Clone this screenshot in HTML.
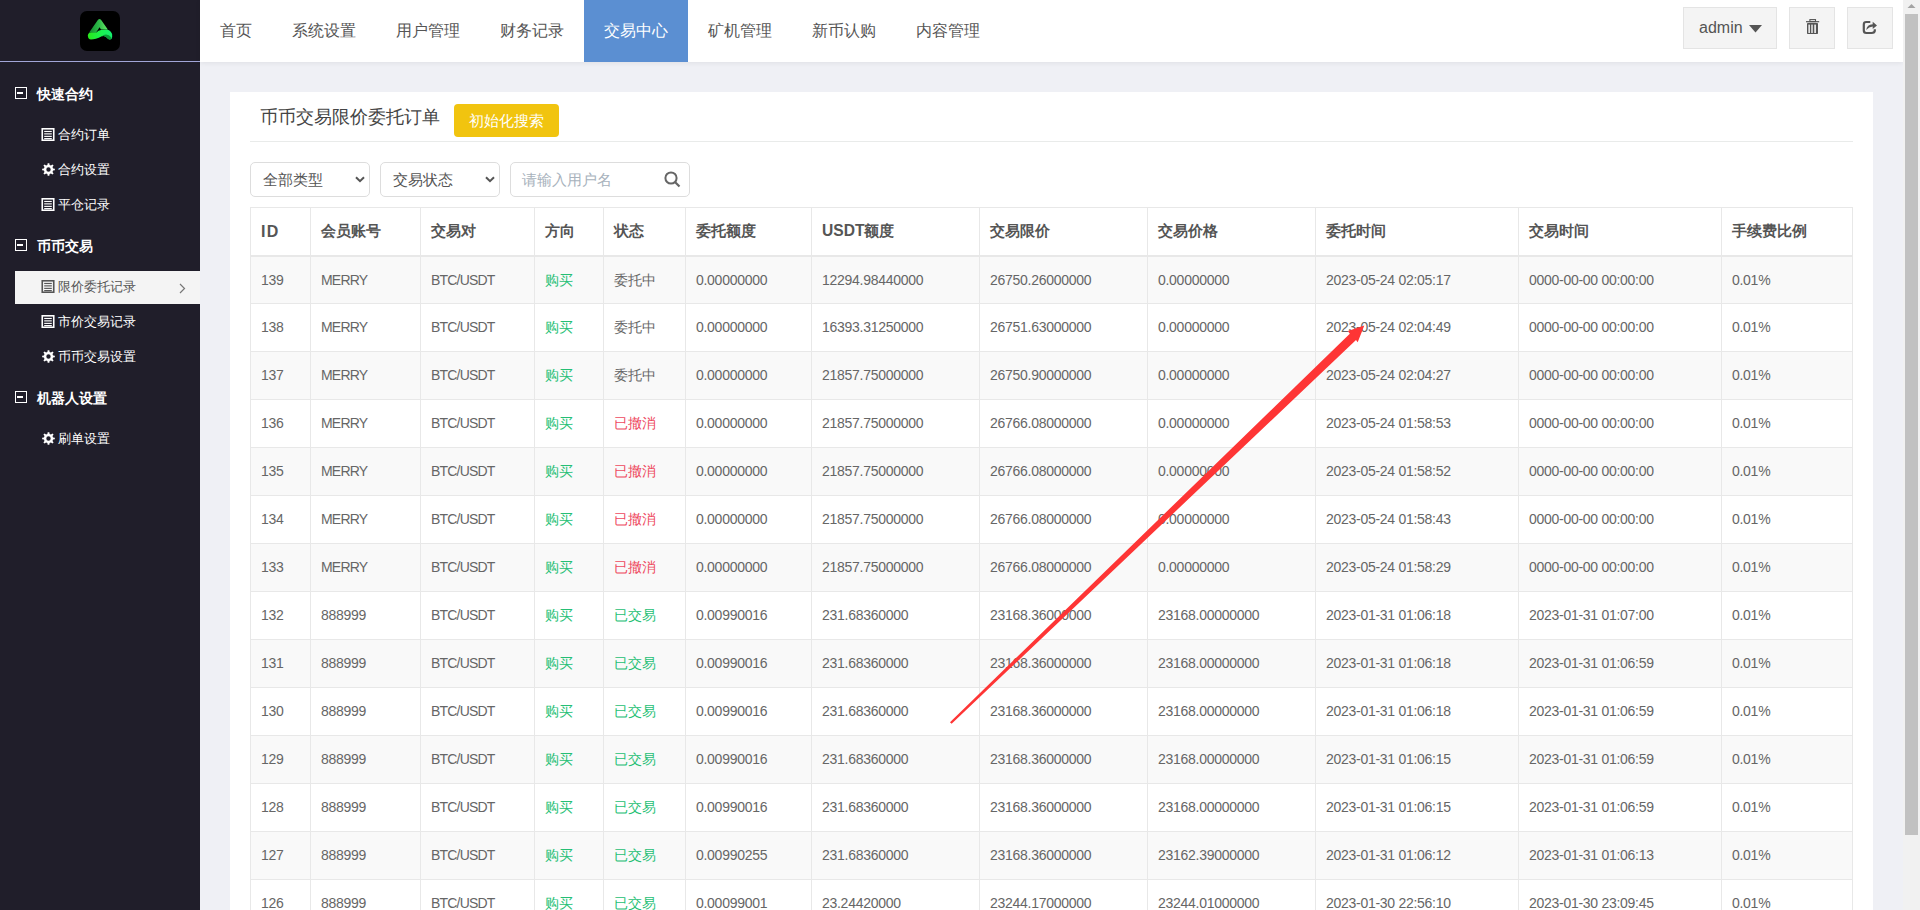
<!DOCTYPE html>
<html>
<head>
<meta charset="utf-8">
<style>
*{box-sizing:border-box;margin:0;padding:0}
html,body{width:1920px;height:910px;overflow:hidden}
body{position:relative;background:#eff0f5;font-family:"Liberation Sans",sans-serif;color:#666}
.abs{position:absolute}
#side{position:absolute;left:0;top:0;width:200px;height:910px;background:#201e2a}
#logoline{position:absolute;left:0;top:61px;width:200px;height:1px;background:#a2a6d8}
#logo{position:absolute;left:80px;top:11px;width:40px;height:40px;background:#000;border-radius:7px;overflow:hidden}
.grp{position:absolute;left:37px;font-size:14px;font-weight:bold;color:#fff;line-height:16px;height:16px;white-space:nowrap}
.gico{position:absolute;left:15px;width:12px;height:12px;border:1.6px solid #fff}
.gico:after{content:"";position:absolute;left:1.4px;top:3.6px;width:6px;height:2px;background:#fff}
.sub{position:absolute;left:58px;font-size:13px;color:#fff;line-height:16px;height:16px;white-space:nowrap}
.sico{position:absolute;left:42px;width:13px;height:13px}
#active{position:absolute;left:15px;top:271px;width:185px;height:33px;background:#f4f4f4}
#hdr{position:absolute;left:200px;top:0;width:1703px;height:62px;background:#fff;box-shadow:0 1px 5px rgba(0,0,0,.07)}
.nav{position:absolute;top:0;height:62px;line-height:62px;font-size:16px;color:#555;padding:0 20px;white-space:nowrap}
.nav.on{background:#5b8fd2;color:#fff}
.hbtn{position:absolute;top:7px;height:42px;background:#f4f4f4;border:1px solid #e4e4e4}
#sb{position:absolute;left:1903px;top:0;width:17px;height:910px;background:#f1f1f1}
#thumb{position:absolute;left:2px;top:14px;width:13px;height:821px;background:#c1c1c1}
#card{position:absolute;left:230px;top:92px;width:1643px;height:830px;background:#fff}
.title{position:absolute;left:260px;top:105px;font-size:18px;color:#444;line-height:24px;white-space:nowrap}
#btn{position:absolute;left:454px;top:104px;width:105px;height:33px;background:#f1c40f;border-radius:4px;color:#fff;font-size:15px;line-height:33px;text-align:center}
#hr{position:absolute;left:250px;top:141px;width:1603px;height:1px;background:#e9ebea}
.sel{position:absolute;top:162px;height:35px;border:1px solid #ddd;border-radius:5px;background:#fff}
.seltxt{position:absolute;left:12px;top:8px;font-size:15px;color:#555;line-height:18px;white-space:nowrap}
.th{position:absolute;top:221px;font-size:14.5px;font-weight:bold;color:#555;line-height:20px;white-space:nowrap}
.td{position:absolute;font-size:14px;letter-spacing:-0.28px;color:#666;line-height:20px;white-space:nowrap}
.td.cn{font-size:13.5px;letter-spacing:0;margin-top:0.5px}
.lt{letter-spacing:-0.8px}
.g{color:#26bf75}
.r{color:#ee4a5f}
.stripe{position:absolute;left:251px;width:1601px;background:#f9f9f9}
.hl{position:absolute;left:250px;width:1603px;background:#e8e8e8}
.vl{position:absolute;top:207px;width:1px;height:703px;background:#e8e8e8}
</style>
</head>
<body>
<div id="side">
  <div id="logo">
    <svg width="40" height="40" viewBox="0 0 40 40">
      <defs>
        <linearGradient id="lg1" x1="0" y1="0" x2="1" y2="0"><stop offset="0" stop-color="#138a2e"/><stop offset=".5" stop-color="#2cb848"/><stop offset="1" stop-color="#66e866"/></linearGradient>
        <linearGradient id="lg2" x1="0" y1="0" x2="1" y2="0"><stop offset="0" stop-color="#2ae61a"/><stop offset=".55" stop-color="#1af550"/><stop offset="1" stop-color="#14f070"/></linearGradient>
      </defs>
      <path d="M9 21.8 L18 8.8 Q19.5 7 21 8.8 L27.8 18.4 L21 18.4 L19.5 16.2 L16 21.8 Z" fill="url(#lg1)"/>
      <path d="M7.8 24.5 Q8 21.6 11.5 21.5 L16.3 21.5 Q18.5 19.6 21 19.1 L26.5 18.4 Q29.5 18.6 30.8 20.8 Q32.6 22.5 32.2 26 Q31.8 28.8 29.8 28.6 Q28 28.2 26.6 26.4 Q24.5 24.2 21.8 25.2 Q15.5 28.4 11 28.6 Q8 28.6 7.8 24.5 Z" fill="url(#lg2)"/>
      <path d="M21.8 25.2 Q24.5 24.2 26.6 26.4 Q28 28.2 29.8 28.6 Q31.5 28.6 31.4 26.5 Q29 23.6 26 23.6 Q23.5 23.8 21.8 25.2Z" fill="#0a9e38"/>
    </svg>
  </div>
  <div id="logoline"></div>

  <div class="gico" style="top:87px"></div><div class="grp" style="top:86px">快速合约</div>
  <svg class="abs" style="left:41px;top:128px" width="14" height="13" viewBox="0 0 14 13"><rect x="1.25" y=".8" width="11.5" height="11.45" fill="none" stroke="#fff" stroke-width="1.6"/><rect x="3.2" y="2.9" width="7.6" height="1.15" fill="#fff"/><rect x="3.2" y="5.3" width="7.6" height="1.15" fill="#fff"/><rect x="3.2" y="7.8" width="7.6" height="1.15" fill="#fff"/><rect x="3.2" y="10.0" width="7.6" height="1.15" fill="#fff"/></svg>
  <div class="sub" style="top:127px">合约订单</div>
  <svg class="sico" style="top:163px" viewBox="0 0 13 13"><path d="M5.65 0.16 L7.35 0.16 L7.60 1.93 L8.96 2.49 L10.38 1.41 L11.59 2.62 L10.51 4.04 L11.07 5.40 L12.84 5.65 L12.84 7.35 L11.07 7.60 L10.51 8.96 L11.59 10.38 L10.38 11.59 L8.96 10.51 L7.60 11.07 L7.35 12.84 L5.65 12.84 L5.40 11.07 L4.04 10.51 L2.62 11.59 L1.41 10.38 L2.49 8.96 L1.93 7.60 L0.16 7.35 L0.16 5.65 L1.93 5.40 L2.49 4.04 L1.41 2.62 L2.62 1.41 L4.04 2.49 L5.40 1.93Z M6.5 4.3 A2.2 2.2 0 1 0 6.5 8.7 A2.2 2.2 0 1 0 6.5 4.3Z" fill="#fff" fill-rule="evenodd"/></svg>
  <div class="sub" style="top:162px">合约设置</div>
  <svg class="abs" style="left:41px;top:198px" width="14" height="13" viewBox="0 0 14 13"><rect x="1.25" y=".8" width="11.5" height="11.45" fill="none" stroke="#fff" stroke-width="1.6"/><rect x="3.2" y="2.9" width="7.6" height="1.15" fill="#fff"/><rect x="3.2" y="5.3" width="7.6" height="1.15" fill="#fff"/><rect x="3.2" y="7.8" width="7.6" height="1.15" fill="#fff"/><rect x="3.2" y="10.0" width="7.6" height="1.15" fill="#fff"/></svg>
  <div class="sub" style="top:197px">平仓记录</div>

  <div class="gico" style="top:239px"></div><div class="grp" style="top:238px">币币交易</div>
  <div id="active"></div>
  <svg class="abs" style="left:41px;top:280px" width="14" height="13" viewBox="0 0 14 13"><rect x="1.25" y=".8" width="11.5" height="11.45" fill="none" stroke="#555" stroke-width="1.6"/><rect x="3.2" y="2.9" width="7.6" height="1.15" fill="#555"/><rect x="3.2" y="5.3" width="7.6" height="1.15" fill="#555"/><rect x="3.2" y="7.8" width="7.6" height="1.15" fill="#555"/><rect x="3.2" y="10.0" width="7.6" height="1.15" fill="#555"/></svg>
  <div class="sub" style="top:279px;color:#555">限价委托记录</div>
  <svg class="abs" style="left:179px;top:283px" width="7" height="11" viewBox="0 0 7 11"><path d="M1 1 L5.5 5.5 L1 10" fill="none" stroke="#777" stroke-width="1.2"/></svg>
  <svg class="abs" style="left:41px;top:315px" width="14" height="13" viewBox="0 0 14 13"><rect x="1.25" y=".8" width="11.5" height="11.45" fill="none" stroke="#fff" stroke-width="1.6"/><rect x="3.2" y="2.9" width="7.6" height="1.15" fill="#fff"/><rect x="3.2" y="5.3" width="7.6" height="1.15" fill="#fff"/><rect x="3.2" y="7.8" width="7.6" height="1.15" fill="#fff"/><rect x="3.2" y="10.0" width="7.6" height="1.15" fill="#fff"/></svg>
  <div class="sub" style="top:314px">市价交易记录</div>
  <svg class="sico" style="top:350px" viewBox="0 0 13 13"><path d="M5.65 0.16 L7.35 0.16 L7.60 1.93 L8.96 2.49 L10.38 1.41 L11.59 2.62 L10.51 4.04 L11.07 5.40 L12.84 5.65 L12.84 7.35 L11.07 7.60 L10.51 8.96 L11.59 10.38 L10.38 11.59 L8.96 10.51 L7.60 11.07 L7.35 12.84 L5.65 12.84 L5.40 11.07 L4.04 10.51 L2.62 11.59 L1.41 10.38 L2.49 8.96 L1.93 7.60 L0.16 7.35 L0.16 5.65 L1.93 5.40 L2.49 4.04 L1.41 2.62 L2.62 1.41 L4.04 2.49 L5.40 1.93Z M6.5 4.3 A2.2 2.2 0 1 0 6.5 8.7 A2.2 2.2 0 1 0 6.5 4.3Z" fill="#fff" fill-rule="evenodd"/></svg>
  <div class="sub" style="top:349px">币币交易设置</div>

  <div class="gico" style="top:391px"></div><div class="grp" style="top:390px">机器人设置</div>
  <svg class="sico" style="top:432px" viewBox="0 0 13 13"><path d="M5.65 0.16 L7.35 0.16 L7.60 1.93 L8.96 2.49 L10.38 1.41 L11.59 2.62 L10.51 4.04 L11.07 5.40 L12.84 5.65 L12.84 7.35 L11.07 7.60 L10.51 8.96 L11.59 10.38 L10.38 11.59 L8.96 10.51 L7.60 11.07 L7.35 12.84 L5.65 12.84 L5.40 11.07 L4.04 10.51 L2.62 11.59 L1.41 10.38 L2.49 8.96 L1.93 7.60 L0.16 7.35 L0.16 5.65 L1.93 5.40 L2.49 4.04 L1.41 2.62 L2.62 1.41 L4.04 2.49 L5.40 1.93Z M6.5 4.3 A2.2 2.2 0 1 0 6.5 8.7 A2.2 2.2 0 1 0 6.5 4.3Z" fill="#fff" fill-rule="evenodd"/></svg>
  <div class="sub" style="top:431px">刷单设置</div>
</div>

<div id="hdr">
  <div class="nav" style="left:0">首页</div>
  <div class="nav" style="left:72px">系统设置</div>
  <div class="nav" style="left:176px">用户管理</div>
  <div class="nav" style="left:280px">财务记录</div>
  <div class="nav on" style="left:384px;width:104px">交易中心</div>
  <div class="nav" style="left:488px">矿机管理</div>
  <div class="nav" style="left:592px">新币认购</div>
  <div class="nav" style="left:696px">内容管理</div>

  <div class="hbtn" style="left:1483px;width:94px">
    <div class="abs" style="left:15px;top:10px;font-size:16px;color:#555;line-height:20px">admin</div>
    <svg class="abs" style="left:65px;top:17px" width="13" height="8" viewBox="0 0 13 8"><path d="M0 0 L13 0 L6.5 7.5Z" fill="#555"/></svg>
  </div>
  <div class="hbtn" style="left:1589px;width:46px">
    <svg class="abs" style="left:16px;top:11px" width="14" height="16" viewBox="0 0 14 16"><rect x="3.9" y="0.6" width="5.6" height="2" fill="none" stroke="#555" stroke-width="1.1"/><rect x="0" y="2.1" width="13.2" height="1.2" fill="#555"/><rect x="1" y="4" width="11" height="11" rx="0.8" fill="#555"/><rect x="2.4" y="5.6" width="1.5" height="8.4" fill="#f4f4f4"/><rect x="5.3" y="5.6" width="1.4" height="8.4" fill="#f4f4f4"/><rect x="8.3" y="5.6" width="1.6" height="8.4" fill="#f4f4f4"/></svg>
  </div>
  <div class="hbtn" style="left:1647px;width:46px">
    <svg class="abs" style="left:14px;top:12px" width="16" height="15" viewBox="0 0 16 15"><path d="M8.3 2 H4.2 Q1.8 2 1.8 4.5 V10.5 Q1.8 13 4.3 13 H9.5 Q12.8 13 12.8 10.5 V9.2" fill="none" stroke="#555" stroke-width="2.2"/><path d="M4.2 10 Q5 4.3 10.7 4.2 V1.8 L15 5.4 L10.7 9 V6.6 Q7 6.8 4.2 10 Z" fill="#555"/></svg>
  </div>
</div>

<div id="sb">
  <svg class="abs" style="left:4px;top:3px" width="9" height="6" viewBox="0 0 9 6"><path d="M0.5 5 L4.5 1 L8.5 5Z" fill="#a3a3a3"/></svg>
  <div id="thumb"></div>
</div>

<div id="card"></div>
<div class="title">币币交易限价委托订单</div>
<div id="btn">初始化搜索</div>
<div id="hr"></div>

<div class="sel" style="left:250px;width:120px"><div class="seltxt">全部类型</div>
  <svg class="abs" style="left:104px;top:13px" width="10" height="7" viewBox="0 0 10 7"><path d="M1 1.2 L5 5.2 L9 1.2" fill="none" stroke="#555" stroke-width="2"/></svg></div>
<div class="sel" style="left:380px;width:120px"><div class="seltxt">交易状态</div>
  <svg class="abs" style="left:104px;top:13px" width="10" height="7" viewBox="0 0 10 7"><path d="M1 1.2 L5 5.2 L9 1.2" fill="none" stroke="#555" stroke-width="2"/></svg></div>
<div class="sel" style="left:510px;width:180px"><div class="seltxt" style="left:11px;color:#a8b2bc">请输入用户名</div>
  <svg class="abs" style="left:153px;top:8px" width="17" height="17" viewBox="0 0 17 17"><circle cx="7" cy="7" r="5.6" fill="none" stroke="#666" stroke-width="2"/><path d="M11 11 L15.5 15.5" stroke="#666" stroke-width="2.2"/></svg></div>

<div class="th" style="left:261px"><span style="font-size:16px;letter-spacing:1.4px;position:relative;top:0.5px">ID</span></div>
<div class="th" style="left:321px">会员账号</div>
<div class="th" style="left:431px">交易对</div>
<div class="th" style="left:545px">方向</div>
<div class="th" style="left:614px">状态</div>
<div class="th" style="left:696px">委托额度</div>
<div class="th" style="left:822px"><span style="font-size:15.6px;position:relative;top:0.3px">USDT</span>额度</div>
<div class="th" style="left:990px">交易限价</div>
<div class="th" style="left:1158px">交易价格</div>
<div class="th" style="left:1326px">委托时间</div>
<div class="th" style="left:1529px">交易时间</div>
<div class="th" style="left:1732px">手续费比例</div>
<div class="stripe" style="top:257px;height:46px"></div>
<div class="td" style="left:261px;top:270px">139</div>
<div class="td" style="left:321px;top:270px"><span class="lt">MERRY</span></div>
<div class="td" style="left:431px;top:270px"><span class="lt">BTC/USDT</span></div>
<div class="td cn" style="left:545px;top:270px"><span class="g">购买</span></div>
<div class="td cn" style="left:614px;top:270px">委托中</div>
<div class="td" style="left:696px;top:270px">0.00000000</div>
<div class="td" style="left:822px;top:270px">12294.98440000</div>
<div class="td" style="left:990px;top:270px">26750.26000000</div>
<div class="td" style="left:1158px;top:270px">0.00000000</div>
<div class="td" style="left:1326px;top:270px">2023-05-24 02:05:17</div>
<div class="td" style="left:1529px;top:270px">0000-00-00 00:00:00</div>
<div class="td" style="left:1732px;top:270px">0.01%</div>
<div class="td" style="left:261px;top:317px">138</div>
<div class="td" style="left:321px;top:317px"><span class="lt">MERRY</span></div>
<div class="td" style="left:431px;top:317px"><span class="lt">BTC/USDT</span></div>
<div class="td cn" style="left:545px;top:317px"><span class="g">购买</span></div>
<div class="td cn" style="left:614px;top:317px">委托中</div>
<div class="td" style="left:696px;top:317px">0.00000000</div>
<div class="td" style="left:822px;top:317px">16393.31250000</div>
<div class="td" style="left:990px;top:317px">26751.63000000</div>
<div class="td" style="left:1158px;top:317px">0.00000000</div>
<div class="td" style="left:1326px;top:317px">2023-05-24 02:04:49</div>
<div class="td" style="left:1529px;top:317px">0000-00-00 00:00:00</div>
<div class="td" style="left:1732px;top:317px">0.01%</div>
<div class="stripe" style="top:352px;height:47px"></div>
<div class="td" style="left:261px;top:365px">137</div>
<div class="td" style="left:321px;top:365px"><span class="lt">MERRY</span></div>
<div class="td" style="left:431px;top:365px"><span class="lt">BTC/USDT</span></div>
<div class="td cn" style="left:545px;top:365px"><span class="g">购买</span></div>
<div class="td cn" style="left:614px;top:365px">委托中</div>
<div class="td" style="left:696px;top:365px">0.00000000</div>
<div class="td" style="left:822px;top:365px">21857.75000000</div>
<div class="td" style="left:990px;top:365px">26750.90000000</div>
<div class="td" style="left:1158px;top:365px">0.00000000</div>
<div class="td" style="left:1326px;top:365px">2023-05-24 02:04:27</div>
<div class="td" style="left:1529px;top:365px">0000-00-00 00:00:00</div>
<div class="td" style="left:1732px;top:365px">0.01%</div>
<div class="td" style="left:261px;top:413px">136</div>
<div class="td" style="left:321px;top:413px"><span class="lt">MERRY</span></div>
<div class="td" style="left:431px;top:413px"><span class="lt">BTC/USDT</span></div>
<div class="td cn" style="left:545px;top:413px"><span class="g">购买</span></div>
<div class="td cn" style="left:614px;top:413px"><span class="r">已撤消</span></div>
<div class="td" style="left:696px;top:413px">0.00000000</div>
<div class="td" style="left:822px;top:413px">21857.75000000</div>
<div class="td" style="left:990px;top:413px">26766.08000000</div>
<div class="td" style="left:1158px;top:413px">0.00000000</div>
<div class="td" style="left:1326px;top:413px">2023-05-24 01:58:53</div>
<div class="td" style="left:1529px;top:413px">0000-00-00 00:00:00</div>
<div class="td" style="left:1732px;top:413px">0.01%</div>
<div class="stripe" style="top:448px;height:47px"></div>
<div class="td" style="left:261px;top:461px">135</div>
<div class="td" style="left:321px;top:461px"><span class="lt">MERRY</span></div>
<div class="td" style="left:431px;top:461px"><span class="lt">BTC/USDT</span></div>
<div class="td cn" style="left:545px;top:461px"><span class="g">购买</span></div>
<div class="td cn" style="left:614px;top:461px"><span class="r">已撤消</span></div>
<div class="td" style="left:696px;top:461px">0.00000000</div>
<div class="td" style="left:822px;top:461px">21857.75000000</div>
<div class="td" style="left:990px;top:461px">26766.08000000</div>
<div class="td" style="left:1158px;top:461px">0.00000000</div>
<div class="td" style="left:1326px;top:461px">2023-05-24 01:58:52</div>
<div class="td" style="left:1529px;top:461px">0000-00-00 00:00:00</div>
<div class="td" style="left:1732px;top:461px">0.01%</div>
<div class="td" style="left:261px;top:509px">134</div>
<div class="td" style="left:321px;top:509px"><span class="lt">MERRY</span></div>
<div class="td" style="left:431px;top:509px"><span class="lt">BTC/USDT</span></div>
<div class="td cn" style="left:545px;top:509px"><span class="g">购买</span></div>
<div class="td cn" style="left:614px;top:509px"><span class="r">已撤消</span></div>
<div class="td" style="left:696px;top:509px">0.00000000</div>
<div class="td" style="left:822px;top:509px">21857.75000000</div>
<div class="td" style="left:990px;top:509px">26766.08000000</div>
<div class="td" style="left:1158px;top:509px">0.00000000</div>
<div class="td" style="left:1326px;top:509px">2023-05-24 01:58:43</div>
<div class="td" style="left:1529px;top:509px">0000-00-00 00:00:00</div>
<div class="td" style="left:1732px;top:509px">0.01%</div>
<div class="stripe" style="top:544px;height:47px"></div>
<div class="td" style="left:261px;top:557px">133</div>
<div class="td" style="left:321px;top:557px"><span class="lt">MERRY</span></div>
<div class="td" style="left:431px;top:557px"><span class="lt">BTC/USDT</span></div>
<div class="td cn" style="left:545px;top:557px"><span class="g">购买</span></div>
<div class="td cn" style="left:614px;top:557px"><span class="r">已撤消</span></div>
<div class="td" style="left:696px;top:557px">0.00000000</div>
<div class="td" style="left:822px;top:557px">21857.75000000</div>
<div class="td" style="left:990px;top:557px">26766.08000000</div>
<div class="td" style="left:1158px;top:557px">0.00000000</div>
<div class="td" style="left:1326px;top:557px">2023-05-24 01:58:29</div>
<div class="td" style="left:1529px;top:557px">0000-00-00 00:00:00</div>
<div class="td" style="left:1732px;top:557px">0.01%</div>
<div class="td" style="left:261px;top:605px">132</div>
<div class="td" style="left:321px;top:605px">888999</div>
<div class="td" style="left:431px;top:605px"><span class="lt">BTC/USDT</span></div>
<div class="td cn" style="left:545px;top:605px"><span class="g">购买</span></div>
<div class="td cn" style="left:614px;top:605px"><span class="g">已交易</span></div>
<div class="td" style="left:696px;top:605px">0.00990016</div>
<div class="td" style="left:822px;top:605px">231.68360000</div>
<div class="td" style="left:990px;top:605px">23168.36000000</div>
<div class="td" style="left:1158px;top:605px">23168.00000000</div>
<div class="td" style="left:1326px;top:605px">2023-01-31 01:06:18</div>
<div class="td" style="left:1529px;top:605px">2023-01-31 01:07:00</div>
<div class="td" style="left:1732px;top:605px">0.01%</div>
<div class="stripe" style="top:640px;height:47px"></div>
<div class="td" style="left:261px;top:653px">131</div>
<div class="td" style="left:321px;top:653px">888999</div>
<div class="td" style="left:431px;top:653px"><span class="lt">BTC/USDT</span></div>
<div class="td cn" style="left:545px;top:653px"><span class="g">购买</span></div>
<div class="td cn" style="left:614px;top:653px"><span class="g">已交易</span></div>
<div class="td" style="left:696px;top:653px">0.00990016</div>
<div class="td" style="left:822px;top:653px">231.68360000</div>
<div class="td" style="left:990px;top:653px">23168.36000000</div>
<div class="td" style="left:1158px;top:653px">23168.00000000</div>
<div class="td" style="left:1326px;top:653px">2023-01-31 01:06:18</div>
<div class="td" style="left:1529px;top:653px">2023-01-31 01:06:59</div>
<div class="td" style="left:1732px;top:653px">0.01%</div>
<div class="td" style="left:261px;top:701px">130</div>
<div class="td" style="left:321px;top:701px">888999</div>
<div class="td" style="left:431px;top:701px"><span class="lt">BTC/USDT</span></div>
<div class="td cn" style="left:545px;top:701px"><span class="g">购买</span></div>
<div class="td cn" style="left:614px;top:701px"><span class="g">已交易</span></div>
<div class="td" style="left:696px;top:701px">0.00990016</div>
<div class="td" style="left:822px;top:701px">231.68360000</div>
<div class="td" style="left:990px;top:701px">23168.36000000</div>
<div class="td" style="left:1158px;top:701px">23168.00000000</div>
<div class="td" style="left:1326px;top:701px">2023-01-31 01:06:18</div>
<div class="td" style="left:1529px;top:701px">2023-01-31 01:06:59</div>
<div class="td" style="left:1732px;top:701px">0.01%</div>
<div class="stripe" style="top:736px;height:47px"></div>
<div class="td" style="left:261px;top:749px">129</div>
<div class="td" style="left:321px;top:749px">888999</div>
<div class="td" style="left:431px;top:749px"><span class="lt">BTC/USDT</span></div>
<div class="td cn" style="left:545px;top:749px"><span class="g">购买</span></div>
<div class="td cn" style="left:614px;top:749px"><span class="g">已交易</span></div>
<div class="td" style="left:696px;top:749px">0.00990016</div>
<div class="td" style="left:822px;top:749px">231.68360000</div>
<div class="td" style="left:990px;top:749px">23168.36000000</div>
<div class="td" style="left:1158px;top:749px">23168.00000000</div>
<div class="td" style="left:1326px;top:749px">2023-01-31 01:06:15</div>
<div class="td" style="left:1529px;top:749px">2023-01-31 01:06:59</div>
<div class="td" style="left:1732px;top:749px">0.01%</div>
<div class="td" style="left:261px;top:797px">128</div>
<div class="td" style="left:321px;top:797px">888999</div>
<div class="td" style="left:431px;top:797px"><span class="lt">BTC/USDT</span></div>
<div class="td cn" style="left:545px;top:797px"><span class="g">购买</span></div>
<div class="td cn" style="left:614px;top:797px"><span class="g">已交易</span></div>
<div class="td" style="left:696px;top:797px">0.00990016</div>
<div class="td" style="left:822px;top:797px">231.68360000</div>
<div class="td" style="left:990px;top:797px">23168.36000000</div>
<div class="td" style="left:1158px;top:797px">23168.00000000</div>
<div class="td" style="left:1326px;top:797px">2023-01-31 01:06:15</div>
<div class="td" style="left:1529px;top:797px">2023-01-31 01:06:59</div>
<div class="td" style="left:1732px;top:797px">0.01%</div>
<div class="stripe" style="top:832px;height:47px"></div>
<div class="td" style="left:261px;top:845px">127</div>
<div class="td" style="left:321px;top:845px">888999</div>
<div class="td" style="left:431px;top:845px"><span class="lt">BTC/USDT</span></div>
<div class="td cn" style="left:545px;top:845px"><span class="g">购买</span></div>
<div class="td cn" style="left:614px;top:845px"><span class="g">已交易</span></div>
<div class="td" style="left:696px;top:845px">0.00990255</div>
<div class="td" style="left:822px;top:845px">231.68360000</div>
<div class="td" style="left:990px;top:845px">23168.36000000</div>
<div class="td" style="left:1158px;top:845px">23162.39000000</div>
<div class="td" style="left:1326px;top:845px">2023-01-31 01:06:12</div>
<div class="td" style="left:1529px;top:845px">2023-01-31 01:06:13</div>
<div class="td" style="left:1732px;top:845px">0.01%</div>
<div class="td" style="left:261px;top:893px">126</div>
<div class="td" style="left:321px;top:893px">888999</div>
<div class="td" style="left:431px;top:893px"><span class="lt">BTC/USDT</span></div>
<div class="td cn" style="left:545px;top:893px"><span class="g">购买</span></div>
<div class="td cn" style="left:614px;top:893px"><span class="g">已交易</span></div>
<div class="td" style="left:696px;top:893px">0.00099001</div>
<div class="td" style="left:822px;top:893px">23.24420000</div>
<div class="td" style="left:990px;top:893px">23244.17000000</div>
<div class="td" style="left:1158px;top:893px">23244.01000000</div>
<div class="td" style="left:1326px;top:893px">2023-01-30 22:56:10</div>
<div class="td" style="left:1529px;top:893px">2023-01-30 23:09:45</div>
<div class="td" style="left:1732px;top:893px">0.01%</div>
<div class="hl" style="top:207px;height:1px"></div>
<div class="hl" style="top:255px;height:2px"></div>
<div class="hl" style="top:303px;height:1px"></div>
<div class="hl" style="top:351px;height:1px"></div>
<div class="hl" style="top:399px;height:1px"></div>
<div class="hl" style="top:447px;height:1px"></div>
<div class="hl" style="top:495px;height:1px"></div>
<div class="hl" style="top:543px;height:1px"></div>
<div class="hl" style="top:591px;height:1px"></div>
<div class="hl" style="top:639px;height:1px"></div>
<div class="hl" style="top:687px;height:1px"></div>
<div class="hl" style="top:735px;height:1px"></div>
<div class="hl" style="top:783px;height:1px"></div>
<div class="hl" style="top:831px;height:1px"></div>
<div class="hl" style="top:879px;height:1px"></div>
<div class="hl" style="top:927px;height:1px"></div>
<div class="vl" style="left:250px"></div>
<div class="vl" style="left:310px"></div>
<div class="vl" style="left:420px"></div>
<div class="vl" style="left:534px"></div>
<div class="vl" style="left:603px"></div>
<div class="vl" style="left:685px"></div>
<div class="vl" style="left:811px"></div>
<div class="vl" style="left:979px"></div>
<div class="vl" style="left:1147px"></div>
<div class="vl" style="left:1315px"></div>
<div class="vl" style="left:1518px"></div>
<div class="vl" style="left:1721px"></div>
<div class="vl" style="left:1852px"></div>

<svg class="abs" style="left:0;top:0;pointer-events:none" width="1920" height="910" viewBox="0 0 1920 910">
  <path d="M949.97 722.13 L1349.8 333.7 L1347.8 331 L1364.3 325.5 L1357.7 342.3 L1356 340 L951.63 723.87 Z" fill="#fe3535"/>
</svg>
</body>
</html>
